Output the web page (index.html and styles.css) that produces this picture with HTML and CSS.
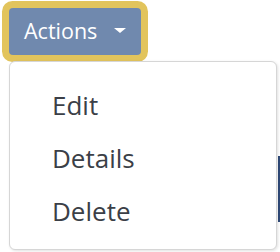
FILE: index.html
```html
<!DOCTYPE html>
<html lang="en">
<head>
    <meta charset="UTF-8">
    <title>Actions</title>
    <link rel="stylesheet" href="styles.css">
</head>
<body>
    <div class="actions">
        <button class="actions-btn" type="button">
            <span>Actions</span>
            <span class="caret"></span>
        </button>

        <!-- Dropdown menu -->
        <ul class="actions-menu">
            <li><a href="#">Edit</a></li>
            <li><a href="#">Details</a></li>
            <li><a href="#">Delete</a></li>
        </ul>
    </div>
    <div class="peek"></div>
</body>
</html>
```
FILE: styles.css
```css
* {
    margin: 0;
    padding: 0;
    box-sizing: border-box;
    font-family: 'Open Sans', 'Noto Sans', sans-serif;
}

body {
    background: white;
    width: 280px;
    height: 252px;
    overflow: hidden;
    position: relative;
}

.actions {
    display: flex;
    flex-direction: column;
    align-items: flex-start;
    padding: 8px 0 0 9px;
}

.actions-btn {
    display: flex;
    align-items: center;
    gap: 17px;
    width: 132px;
    height: 47px;
    padding: 0 0 3px 15px;
    background: #7089ae;
    color: white;
    border: none;
    border-radius: 4px;
    box-shadow: 0 0 0 7px #e2c45c;
    font-size: 21.5px;
    cursor: pointer;
}

.caret {
    width: 0;
    height: 0;
    border-top: 5px solid white;
    border-left: 6px solid transparent;
    border-right: 6px solid transparent;
}

.actions-menu {
    list-style: none;
    margin-top: 6px;
    width: 268px;
    height: 189px;
    padding-top: 17px;
    background: white;
    border: 1px solid #d6d6d6;
    border-radius: 6px;
    box-shadow: 1px 1px 3px rgba(0, 0, 0, 0.12);
}

.actions-menu a {
    display: block;
    padding-left: 42px;
    line-height: 53px;
    font-size: 26px;
    color: #3b3f47;
    text-decoration: none;
}

.peek {
    position: absolute;
    left: 278px;
    top: 156px;
    width: 4px;
    height: 66px;
    background: #2f4a78;
    z-index: -1;
}
```
